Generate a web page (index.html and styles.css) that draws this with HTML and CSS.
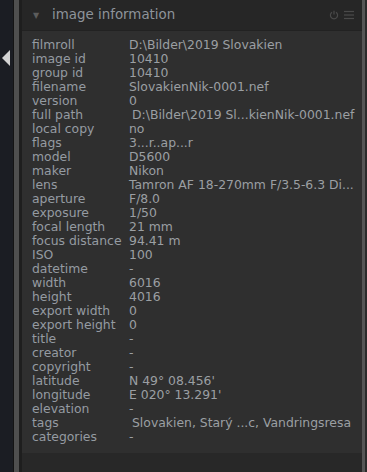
FILE: index.html
```html
<!DOCTYPE html>
<html lang="en">
<head>
    <meta charset="UTF-8">
    <title>image information</title>
    <link rel="stylesheet" href="styles.css">
</head>
<body>
    <div class="edge">
        <span class="collapse-arrow"></span>
    </div>
    <div class="edge-line"></div>
    <div class="grip"></div>
    <div class="gutter"></div>

    <div class="module">
        <div class="module-header">
            <span class="expander">▼</span>
            <span class="module-title">image information</span>
            <span class="header-icons">
                <svg width="10" height="10" viewBox="0 0 10 10">
                    <path d="M3 2.2 A3.6 3.6 0 1 0 7 2.2" fill="none" stroke="#4a4a4a" stroke-width="1.2"/>
                    <line x1="5" y1="0.8" x2="5" y2="4.6" stroke="#4a4a4a" stroke-width="1.2"/>
                </svg>
                <svg width="10" height="10" viewBox="0 0 10 10">
                    <line x1="0" y1="1.5" x2="10" y2="1.5" stroke="#4a4a4a" stroke-width="1.2"/>
                    <line x1="0" y1="5" x2="10" y2="5" stroke="#4a4a4a" stroke-width="1.2"/>
                    <line x1="0" y1="8.5" x2="10" y2="8.5" stroke="#4a4a4a" stroke-width="1.2"/>
                </svg>
            </span>
        </div>

        <div class="info-list">
            <div class="info-row"><span class="label">filmroll</span><span class="value">D:\Bilder\2019 Slovakien</span></div>
            <div class="info-row"><span class="label">image id</span><span class="value">10410</span></div>
            <div class="info-row"><span class="label">group id</span><span class="value">10410</span></div>
            <div class="info-row"><span class="label">filename</span><span class="value">SlovakienNik-0001.nef</span></div>
            <div class="info-row"><span class="label">version</span><span class="value">0</span></div>
            <div class="info-row"><span class="label">full path</span><span class="value shifted">D:\Bilder\2019 Sl...kienNik-0001.nef</span></div>
            <div class="info-row"><span class="label">local copy</span><span class="value">no</span></div>
            <div class="info-row"><span class="label">flags</span><span class="value">3...r..ap...r</span></div>
            <div class="info-row"><span class="label">model</span><span class="value">D5600</span></div>
            <div class="info-row"><span class="label">maker</span><span class="value">Nikon</span></div>
            <div class="info-row"><span class="label">lens</span><span class="value">Tamron AF 18-270mm F/3.5-6.3 Di...</span></div>
            <div class="info-row"><span class="label">aperture</span><span class="value">F/8.0</span></div>
            <div class="info-row"><span class="label">exposure</span><span class="value">1/50</span></div>
            <div class="info-row"><span class="label">focal length</span><span class="value">21 mm</span></div>
            <div class="info-row"><span class="label">focus distance</span><span class="value">94.41 m</span></div>
            <div class="info-row"><span class="label">ISO</span><span class="value">100</span></div>
            <div class="info-row"><span class="label">datetime</span><span class="value">-</span></div>
            <div class="info-row"><span class="label">width</span><span class="value">6016</span></div>
            <div class="info-row"><span class="label">height</span><span class="value">4016</span></div>
            <div class="info-row"><span class="label">export width</span><span class="value">0</span></div>
            <div class="info-row"><span class="label">export height</span><span class="value">0</span></div>
            <div class="info-row"><span class="label">title</span><span class="value">-</span></div>
            <div class="info-row"><span class="label">creator</span><span class="value">-</span></div>
            <div class="info-row"><span class="label">copyright</span><span class="value">-</span></div>
            <div class="info-row"><span class="label">latitude</span><span class="value">N 49° 08.456'</span></div>
            <div class="info-row"><span class="label">longitude</span><span class="value">E 020° 13.291'</span></div>
            <div class="info-row"><span class="label">elevation</span><span class="value">-</span></div>
            <div class="info-row"><span class="label">tags</span><span class="value shifted">Slovakien, Starý ...c, Vandringsresa</span></div>
            <div class="info-row"><span class="label">categories</span><span class="value">-</span></div>
        </div>

        <div class="module-rest"></div>
    </div>

    <div class="scrollbar"></div>
    <div class="rim"></div>
</body>
</html>
```

FILE: styles.css
```css
* {
    box-sizing: border-box;
    margin: 0;
    padding: 0;
}

html, body {
    height: 100%;
}

body {
    display: flex;
    background-color: #2a2a2a;
    font-family: 'DejaVu Sans', sans-serif;
    overflow: hidden;
}

/* left side strips */
.edge {
    width: 13px;
    background-color: #1b1d23;
    position: relative;
}

.collapse-arrow {
    position: absolute;
    left: 2px;
    top: 50px;
    width: 0;
    height: 0;
    border-top: 8px solid transparent;
    border-bottom: 8px solid transparent;
    border-right: 8px solid #d4d4d4;
}

.edge-line {
    width: 1px;
    background-color: #141414;
}

.grip {
    width: 5px;
    background-color: #4f4f4f;
}

.gutter {
    width: 3px;
    background-color: #1e1e1e;
}

/* module */
.module {
    flex: 1;
    display: flex;
    flex-direction: column;
}

.module-header {
    height: 31px;
    display: flex;
    align-items: center;
    background-color: #262626;
    border-bottom: 1px solid #222;
    padding: 0 8px 0 11px;
}

.expander {
    font-size: 8px;
    color: #5c5c5c;
    width: 19px;
}

.module-title {
    flex: 1;
    font-size: 13.4px;
    color: #8e949b;
    padding-bottom: 2px;
}

.header-icons {
    display: flex;
    gap: 5px;
    align-items: center;
}

.info-list {
    background-color: #2f2f2f;
    padding: 7px 0 9px 10px;
}

.info-row {
    display: flex;
    height: 14px;
    line-height: 14px;
    font-size: 12.4px;
    color: #959ba2;
    white-space: nowrap;
}

.label {
    width: 97px;
}

.value {
    color: #9b9fa3;
}

.value.shifted {
    padding-left: 3px;
}

.module-rest {
    flex: 1;
    background-color: #282828;
}

.scrollbar {
    width: 3px;
    background-color: #565656;
}

.rim {
    width: 2px;
    background-color: #2b2b2b;
}
```
